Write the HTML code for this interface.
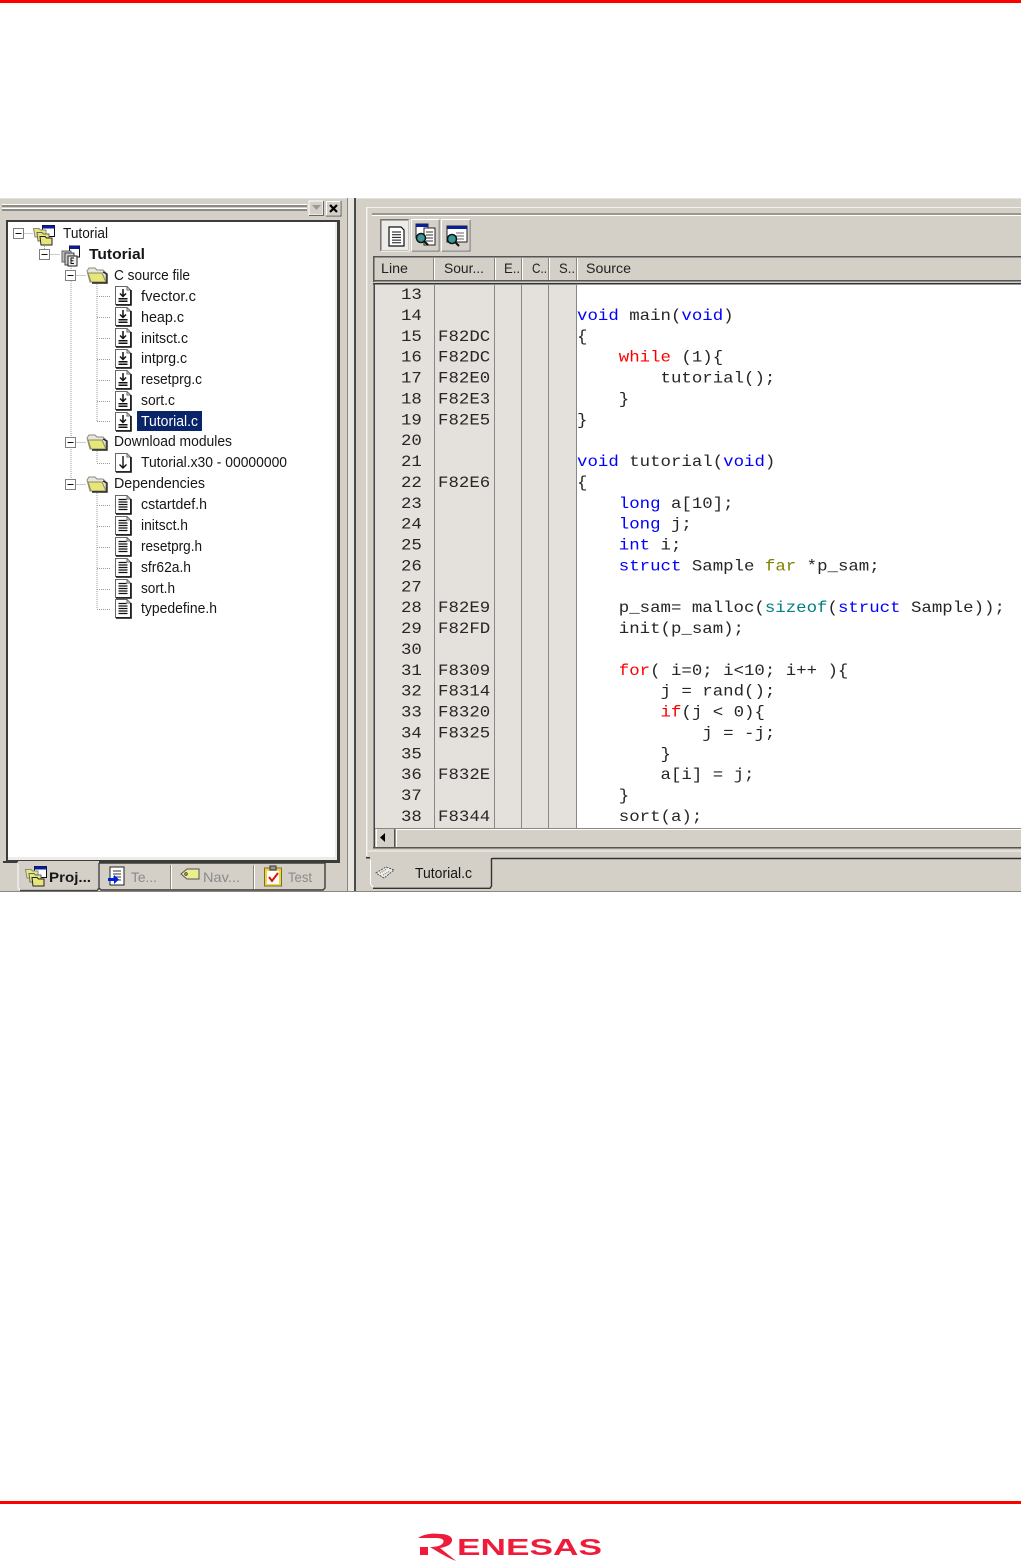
<!DOCTYPE html>
<html><head><meta charset="utf-8"><title>Tutorial</title>
<style>
html,body{margin:0;padding:0;background:#fff;}
svg{display:block;}
text{white-space:pre;}
.s{font-family:"Liberation Sans",sans-serif;font-size:15px;fill:#161616;}
.m{font-family:"Liberation Mono",monospace;font-size:16px;fill:#262626;}
.b{fill:#0000ff;}.r{fill:#ff0000;}.t{fill:#008080;}.o{fill:#808000;}
.g{fill:#8a8a8a;}
</style></head><body>
<svg xmlns="http://www.w3.org/2000/svg" width="1021" height="1562" viewBox="0 0 1021 1562">
<defs>
<g id="fb">
<path d="M.5 .5H12L15.5 4V18.5H.5Z" fill="#fff" stroke="#666"/>
<path d="M12 .5V4H15.5" fill="none" stroke="#666"/>
<path d="M16 4V19H1" fill="none" stroke="#111" stroke-width="1.6"/>
</g>
<g id="fd"><use href="#fb"/>
<path d="M8 3V10M5 7.5L8 10.5L11 7.5M3.5 12.7H12.5M3.5 15.2H12.5" fill="none" stroke="#111" stroke-width="1.5"/></g>
<g id="fa"><use href="#fb"/>
<path d="M8 3V15M4.5 11.5L8 15L11.5 11.5" fill="none" stroke="#111" stroke-width="1.4"/></g>
<g id="ft"><use href="#fb"/>
<path d="M3.5 4.5H11.5M3.5 7H12.5M3.5 9.5H12.5M3.5 12H12.5M3.5 14.5H12.5" fill="none" stroke="#111" stroke-width="1.3"/></g>
<g id="fo">
<path d="M1 5L3 2H9L11 4H17L20 7V16H4Z" fill="#e9e6de" stroke="#8a8a80"/>
<path d="M2 7H16L20 16H5Z" fill="#e6e67a" stroke="#8a8a60"/>
<path d="M17 6L21 8V17H6" fill="none" stroke="#222" stroke-width="1.4"/>
</g>
<g id="pr">
<rect x="9.5" y="1.5" width="12" height="11" fill="#fff" stroke="#111"/><rect x="9.5" y="1.5" width="12" height="3" fill="#0a1e9a"/>
<path d="M.5 4.5H6L7.5 6H13V13H2Z" fill="#e6e67a" stroke="#888"/>
<path d="M4 8.5H9L10.5 10H16V17H5Z" fill="#e6e67a" stroke="#666"/>
<path d="M7 12.5H12L13.5 14H19V21H8Z" fill="#e6e67a" stroke="#222"/>
</g>
<g id="pb">
<rect x="8.5" y="1" width="10" height="11" fill="#fff" stroke="#111"/><rect x="8.5" y="1" width="10" height="3" fill="#0a1e9a"/>
<rect x="1" y="6" width="9" height="11" fill="#bbb" stroke="#666"/>
<rect x="4" y="8" width="9" height="12" fill="#ccc" stroke="#444"/>
<rect x="7" y="11" width="9" height="10" fill="#eee" stroke="#222"/>
<path d="M13 13H10V18.500H13M10 15.700H12.500" stroke="#111" fill="none"/>
</g>
<g id="bx"><rect x=".5" y=".5" width="10" height="10" fill="#fff" stroke="#808080"/><path d="M2.5 5.5H8.5" stroke="#111"/></g>
<clipPath id="cb"><rect x="375" y="284" width="646" height="544"/></clipPath>
</defs>

<!-- page rules -->
<rect width="1021" height="3" fill="#f00"/>
<rect y="1501" width="1021" height="3" fill="#f00"/>

<!-- window -->
<rect y="198" width="1021" height="694" fill="#d4d0c8"/>
<rect y="198" width="1021" height="1" fill="#e4e2dc"/>
<rect y="891" width="1021" height="1" fill="#8a877f"/>

<!-- left title -->
<rect x="2" y="204" width="305" height="1" fill="#fff"/><rect x="2" y="205" width="305" height="2" fill="#8c8a84"/>
<rect x="2" y="208" width="305" height="1" fill="#fff"/><rect x="2" y="209" width="305" height="2" fill="#8c8a84"/>
<rect x="309" y="201" width="14" height="14" fill="#d4d0c8" stroke="#fff"/><path d="M323.5 201V215.5H309" stroke="#666" fill="none"/>
<path d="M312 205H321L316.500 210Z" fill="#9a9a94"/>
<rect x="326.5" y="201.5" width="14" height="14" fill="#d4d0c8" stroke="#fff"/><path d="M341 201V216H326" stroke="#555" fill="none"/>
<path d="M330 205L337 212M337 205L330 212" stroke="#000" stroke-width="2.2"/>

<!-- tree box -->
<rect x="3" y="861" width="15" height="2" fill="#3c3c3a"/>
<rect x="6" y="220" width="334" height="643" fill="#3c3c3a"/>
<rect x="8" y="222" width="329" height="638" fill="#eeece8"/>
<rect x="8" y="222" width="327" height="635" fill="#fff"/>

<!-- tree lines -->
<g stroke="#9a9a9a" stroke-dasharray="1 1" fill="none">
<path d="M23.5 233.5H33M49.5 254.5H60M75.5 275.5H86M75.5 442.5H86M75.5 484.5H86"/>
<path d="M44.5 240V249M71 258V270M71 281V479M97 284V421M97 449V463M97 491V609"/>
<path d="M97 296.5H111M97 317.5H111M97 338.5H111M97 359.5H111M97 380.5H111M97 401.5H111M97 421.5H111M97 463.5H111M97 505.5H111M97 526.5H111M97 547.5H111M97 568.5H111M97 589.5H111M97 609.5H111"/>
</g>
<use href="#bx" x="13" y="228"/><use href="#bx" x="39" y="249"/><use href="#bx" x="65" y="270"/><use href="#bx" x="65" y="437"/><use href="#bx" x="65" y="479"/>

<!-- tree icons -->
<use href="#pr" x="33" y="224"/><use href="#pb" x="61" y="245"/>
<use href="#fo" x="86" y="266"/><use href="#fo" x="86" y="433"/><use href="#fo" x="86" y="475"/>
<use href="#fd" x="115" y="286"/><use href="#fd" x="115" y="307"/><use href="#fd" x="115" y="328"/><use href="#fd" x="115" y="349"/><use href="#fd" x="115" y="370"/><use href="#fd" x="115" y="391"/><use href="#fd" x="115" y="412"/>
<use href="#fa" x="115" y="453"/>
<use href="#ft" x="115" y="495"/><use href="#ft" x="115" y="516"/><use href="#ft" x="115" y="537"/><use href="#ft" x="115" y="558"/><use href="#ft" x="115" y="579"/><use href="#ft" x="115" y="599"/>

<!-- tree text -->
<rect x="137" y="411" width="65" height="20" fill="#0a246a"/>
<g class="s">
<text x="63" y="238" textLength="45" lengthAdjust="spacingAndGlyphs">Tutorial</text>
<text x="89" y="259" textLength="56" lengthAdjust="spacingAndGlyphs" font-weight="bold">Tutorial</text>
<text x="114" y="280" textLength="76" lengthAdjust="spacingAndGlyphs">C source file</text>
<text x="141" y="301" textLength="55" lengthAdjust="spacingAndGlyphs">fvector.c</text>
<text x="141" y="322" textLength="43" lengthAdjust="spacingAndGlyphs">heap.c</text>
<text x="141" y="343" textLength="47" lengthAdjust="spacingAndGlyphs">initsct.c</text>
<text x="141" y="363" textLength="46" lengthAdjust="spacingAndGlyphs">intprg.c</text>
<text x="141" y="384" textLength="61" lengthAdjust="spacingAndGlyphs">resetprg.c</text>
<text x="141" y="405" textLength="34" lengthAdjust="spacingAndGlyphs">sort.c</text>
<text x="141" y="426" textLength="57" lengthAdjust="spacingAndGlyphs" style="fill:#fff">Tutorial.c</text>
<text x="114" y="446" textLength="118" lengthAdjust="spacingAndGlyphs">Download modules</text>
<text x="141" y="467" textLength="146" lengthAdjust="spacingAndGlyphs">Tutorial.x30 - 00000000</text>
<text x="114" y="488" textLength="91" lengthAdjust="spacingAndGlyphs">Dependencies</text>
<text x="141" y="509" textLength="66" lengthAdjust="spacingAndGlyphs">cstartdef.h</text>
<text x="141" y="530" textLength="47" lengthAdjust="spacingAndGlyphs">initsct.h</text>
<text x="141" y="551" textLength="61" lengthAdjust="spacingAndGlyphs">resetprg.h</text>
<text x="141" y="572" textLength="50" lengthAdjust="spacingAndGlyphs">sfr62a.h</text>
<text x="141" y="593" textLength="34" lengthAdjust="spacingAndGlyphs">sort.h</text>
<text x="141" y="613" textLength="76" lengthAdjust="spacingAndGlyphs">typedefine.h</text>
</g>

<!-- left tabs -->
<path d="M18 862V888L20 890H97L99 888V863" fill="#d4d0c8" stroke="#fff"/>
<rect x="18" y="861" width="81" height="3" fill="#d4d0c8"/>
<path d="M20 890.5H97L99 888V863" fill="none" stroke="#444" stroke-width="1.4"/>
<path d="M99 863H325V888L323 890H101L99 888" fill="none" stroke="#3c3c3a" stroke-width="1.4"/>
<path d="M171.5 865V889M254.5 865V889" stroke="#fff"/>
<path d="M170.5 865V889M253.5 865V889" stroke="#8a877f"/>
<use href="#pr" x="25" y="865"/>
<g transform="translate(108,866)"><rect x="2" y="1" width="14" height="18" fill="#fff" stroke="#222"/><path d="M5 5H13M5 8H13M5 11H13M5 14H13" stroke="#333"/><path d="M0 12H6V9L11 13.500L6 18V15H0Z" fill="#0020e0"/></g>
<g transform="translate(180,866)"><path d="M1 8L7 3H19V13H7Z" fill="#ecec90" stroke="#555"/><circle cx="6" cy="8" r="1.2" fill="#fff" stroke="#333"/></g>
<g transform="translate(264,866)"><rect x=".5" y="2" width="17" height="18" fill="#ecd44a" stroke="#80701a"/><rect x="3" y="5" width="12" height="13" fill="#fff"/><rect x="6" y="0" width="6" height="4" fill="#999" stroke="#333"/><path d="M5 11L8 15L14 7" stroke="#e01010" stroke-width="2" fill="none"/></g>
<g class="s">
<text x="49" y="882" textLength="42" lengthAdjust="spacingAndGlyphs" font-weight="bold" style="font-size:14px">Proj...</text>
<text x="131" y="882" textLength="26" lengthAdjust="spacingAndGlyphs" style="fill:#8a8a8a;font-size:14px">Te...</text>
<text x="203" y="882" textLength="37" lengthAdjust="spacingAndGlyphs" style="fill:#8a8a8a;font-size:14px">Nav...</text>
<text x="288" y="882" textLength="24" lengthAdjust="spacingAndGlyphs" style="fill:#8a8a8a;font-size:14px">Test</text>
</g>

<!-- splitter -->
<rect x="347" y="198" width="1" height="693" fill="#8a877f"/>
<rect x="348" y="198" width="6" height="693" fill="#e8e6e0"/>
<rect x="354" y="198" width="2" height="693" fill="#4a4a48"/>

<!-- right panel frame -->
<rect x="367" y="207" width="654" height="1" fill="#f4f2ee"/>
<rect x="366" y="207" width="1.500" height="649" fill="#f4f2ee"/>
<rect x="372" y="213" width="649" height="2" fill="#9a978f"/>
<rect x="372" y="215" width="649" height="1" fill="#fff"/>

<!-- toolbar -->
<rect x="380.5" y="219.5" width="28" height="31" fill="#eeece8" stroke="#8a877f"/>
<path d="M381 250V220H408" stroke="#666" fill="none"/>
<path d="M381 251H409V220" stroke="#fff" fill="none"/>
<rect x="411.5" y="219.5" width="27" height="31" fill="#d4d0c8" stroke="#fff"/><path d="M439 220V251H412" stroke="#666" fill="none"/>
<rect x="441.5" y="219.5" width="28" height="31" fill="#d4d0c8" stroke="#fff"/><path d="M470 220V251H442" stroke="#666" fill="none"/>
<g transform="translate(388,226)"><path d="M1 1H13L16 4V20H1Z" fill="#fff" stroke="#111" stroke-width="1.2"/><path d="M4 6H13M4 8.700H13M4 11.400H13M4 14.100H13M4 16.800H13" stroke="#111"/></g>
<g transform="translate(414,224)"><rect x="2" y="0" width="12" height="14" fill="#fff" stroke="#223"/><rect x="2" y="0" width="12" height="3" fill="#0a1e9a"/><rect x="10" y="4" width="11" height="17" fill="#fff" stroke="#222"/><path d="M12 8H19M12 11H19M12 14H19M12 17H19" stroke="#333"/><circle cx="7" cy="14" r="4.500" fill="#3a9a9a" stroke="#111" stroke-width="1.500"/><path d="M10 17L14 21" stroke="#111" stroke-width="2"/></g>
<g transform="translate(444,225)"><rect x="3" y="1" width="20" height="16" fill="#fff" stroke="#222"/><rect x="3" y="1" width="20" height="3" fill="#0a1e9a"/><path d="M12 8H20M12 11H20M12 14H20" stroke="#666"/><circle cx="8" cy="14" r="4.500" fill="#3a9a9a" stroke="#111" stroke-width="1.500"/><path d="M11 17L15 21" stroke="#111" stroke-width="2"/></g>

<!-- list header -->
<rect x="373" y="256" width="648" height="1.500" fill="#555"/>
<rect x="373" y="256" width="1.500" height="26" fill="#555"/>
<rect x="375" y="258" width="646" height="22" fill="#d4d0c8"/>
<rect x="373" y="280" width="648" height="1.500" fill="#555"/>
<g fill="#fff"><rect x="434" y="258" width="1" height="22"/><rect x="495" y="258" width="1" height="22"/><rect x="522" y="258" width="1" height="22"/><rect x="549" y="258" width="1" height="22"/><rect x="577" y="258" width="1" height="22"/></g>
<g fill="#8a877f"><rect x="433" y="258" width="1" height="22"/><rect x="494" y="258" width="1" height="22"/><rect x="521" y="258" width="1" height="22"/><rect x="548" y="258" width="1" height="22"/><rect x="576" y="258" width="1" height="22"/></g>
<g class="s">
<text x="381" y="273" textLength="27" lengthAdjust="spacingAndGlyphs" style="fill:#222;font-size:14px">Line</text>
<text x="444" y="273" textLength="40" lengthAdjust="spacingAndGlyphs" style="fill:#222;font-size:14px">Sour...</text>
<text x="504" y="273" textLength="16" lengthAdjust="spacingAndGlyphs" style="fill:#222;font-size:14px">E..</text>
<text x="532" y="273" textLength="15" lengthAdjust="spacingAndGlyphs" style="fill:#222;font-size:14px">C..</text>
<text x="559" y="273" textLength="16" lengthAdjust="spacingAndGlyphs" style="fill:#222;font-size:14px">S..</text>
<text x="586" y="273" textLength="45" lengthAdjust="spacingAndGlyphs" style="fill:#222;font-size:14px">Source</text>
</g>

<!-- list body -->
<rect x="373" y="283" width="648" height="1.500" fill="#333"/>
<rect x="373.500" y="283" width="1.500" height="565" fill="#444"/>
<rect x="375" y="284.500" width="202" height="544" fill="#e4e1dc"/>
<rect x="577" y="284.500" width="444" height="544" fill="#fff"/>
<g fill="#888"><rect x="434" y="284" width="1" height="544"/><rect x="494" y="284" width="1" height="544"/><rect x="521" y="284" width="1" height="544"/><rect x="548" y="284" width="1" height="544"/><rect x="576" y="284" width="1" height="544"/></g>

<g clip-path="url(#cb)"><g transform="translate(0,-1) scale(1.0875,1)" class="m">
<text x="368.7" y="300">13</text>
<text x="368.7" y="320.9">14</text>
<text x="368.7" y="341.8">15</text>
<text x="368.7" y="362.6">16</text>
<text x="368.7" y="383.5">17</text>
<text x="368.7" y="404.4">18</text>
<text x="368.7" y="425.3">19</text>
<text x="368.7" y="446.2">20</text>
<text x="368.7" y="467">21</text>
<text x="368.7" y="487.9">22</text>
<text x="368.7" y="508.8">23</text>
<text x="368.7" y="529.7">24</text>
<text x="368.7" y="550.6">25</text>
<text x="368.7" y="571.4">26</text>
<text x="368.7" y="592.3">27</text>
<text x="368.7" y="613.2">28</text>
<text x="368.7" y="634.1">29</text>
<text x="368.7" y="655">30</text>
<text x="368.7" y="675.8">31</text>
<text x="368.7" y="696.7">32</text>
<text x="368.7" y="717.6">33</text>
<text x="368.7" y="738.5">34</text>
<text x="368.7" y="759.4">35</text>
<text x="368.7" y="780.2">36</text>
<text x="368.7" y="801.1">37</text>
<text x="368.7" y="822">38</text>

<text x="402.8" y="341.8">F82DC</text>
<text x="402.8" y="362.6">F82DC</text>
<text x="402.8" y="383.5">F82E0</text>
<text x="402.8" y="404.4">F82E3</text>
<text x="402.8" y="425.3">F82E5</text>
<text x="402.8" y="487.9">F82E6</text>
<text x="402.8" y="613.2">F82E9</text>
<text x="402.8" y="634.1">F82FD</text>
<text x="402.8" y="675.8">F8309</text>
<text x="402.8" y="696.7">F8314</text>
<text x="402.8" y="717.6">F8320</text>
<text x="402.8" y="738.5">F8325</text>
<text x="402.8" y="780.2">F832E</text>
<text x="402.8" y="822">F8344</text>

<text x="530.6" y="320.9"><tspan class="b">void</tspan> main(<tspan class="b">void</tspan>)</text>
<text x="530.6" y="341.8">{</text>
<text x="569" y="362.6"><tspan class="r">while</tspan> (1){</text>
<text x="607.4" y="383.5">tutorial();</text>
<text x="569" y="404.4">}</text>
<text x="530.6" y="425.3">}</text>
<text x="530.6" y="467"><tspan class="b">void</tspan> tutorial(<tspan class="b">void</tspan>)</text>
<text x="530.6" y="487.9">{</text>
<text x="569" y="508.8"><tspan class="b">long</tspan> a[10];</text>
<text x="569" y="529.7"><tspan class="b">long</tspan> j;</text>
<text x="569" y="550.6"><tspan class="b">int</tspan> i;</text>
<text x="569" y="571.4"><tspan class="b">struct</tspan> Sample <tspan class="o">far</tspan> *p_sam;</text>
<text x="569" y="613.2">p_sam= malloc(<tspan class="t">sizeof</tspan>(<tspan class="b">struct</tspan> Sample));</text>
<text x="569" y="634.1">init(p_sam);</text>
<text x="569" y="675.8"><tspan class="r">for</tspan>( i=0; i&lt;10; i++ ){</text>
<text x="607.4" y="696.7">j = rand();</text>
<text x="607.4" y="717.6"><tspan class="r">if</tspan>(j &lt; 0){</text>
<text x="645.8" y="738.5">j = -j;</text>
<text x="607.4" y="759.4">}</text>
<text x="607.4" y="780.2">a[i] = j;</text>
<text x="569" y="801.1">}</text>
<text x="569" y="822">sort(a);</text>
</g></g>

<!-- scrollbar -->
<rect x="375" y="828" width="646" height="19" fill="#d4d0c8"/>
<rect x="375" y="828" width="646" height="1" fill="#8a877f"/>
<rect x="373" y="847" width="648" height="1.500" fill="#555"/>
<rect x="395" y="829" width="626" height="1" fill="#fff"/>
<rect x="396" y="829" width="1" height="18" fill="#fff"/>
<rect x="394" y="829" width="1.500" height="18" fill="#555"/>
<rect x="376" y="829" width="1" height="18" fill="#fff"/>
<path d="M380 837.500L385 833V842Z" fill="#000"/>

<!-- bottom tab -->
<rect x="368" y="850.500" width="653" height="1" fill="#f4f2ee"/>
<path d="M492 858.500H1021" stroke="#333" stroke-width="1.500" fill="none"/>
<rect x="366" y="857" width="4" height="1.500" fill="#333"/>
<path d="M370 859V884L373 888H490L492 886V858Z" fill="#d4d0c8"/>
<path d="M370.500 860V884L373 887" stroke="#fff" fill="none"/>
<path d="M373 888.300H490L491.500 886V858" stroke="#333" stroke-width="1.400" fill="none"/>
<g transform="translate(375,865)"><path d="M1 8L11 2L19 5L9 13Z" fill="#eeeeea" stroke="#555" stroke-dasharray="2 1"/><path d="M5 8L12 4M8 10L15 6" stroke="#666" stroke-dasharray="1 1"/></g>
<text class="s" x="415" y="878" textLength="57" lengthAdjust="spacingAndGlyphs">Tutorial.c</text>

<!-- logo -->
<rect x="420" y="1547" width="8" height="8" fill="#ee1c3a"/>
<path d="M418 1538C424 1534 432 1533 440 1534C448 1534 453 1537 452 1541C451 1545 446 1547 440 1548C445 1552 450 1556 456 1561C448 1558 438 1552 430 1547C436 1547 441 1546 443 1543C445 1540 442 1538 436 1538C430 1538 424 1538 418 1538Z" fill="#ee1c3a"/>
<text x="457" y="1555" textLength="145" lengthAdjust="spacingAndGlyphs" style="font-family:'Liberation Sans',sans-serif;font-size:23px;font-weight:bold;fill:#ee1c3a">ENESAS</text>
</svg>
</body></html>
